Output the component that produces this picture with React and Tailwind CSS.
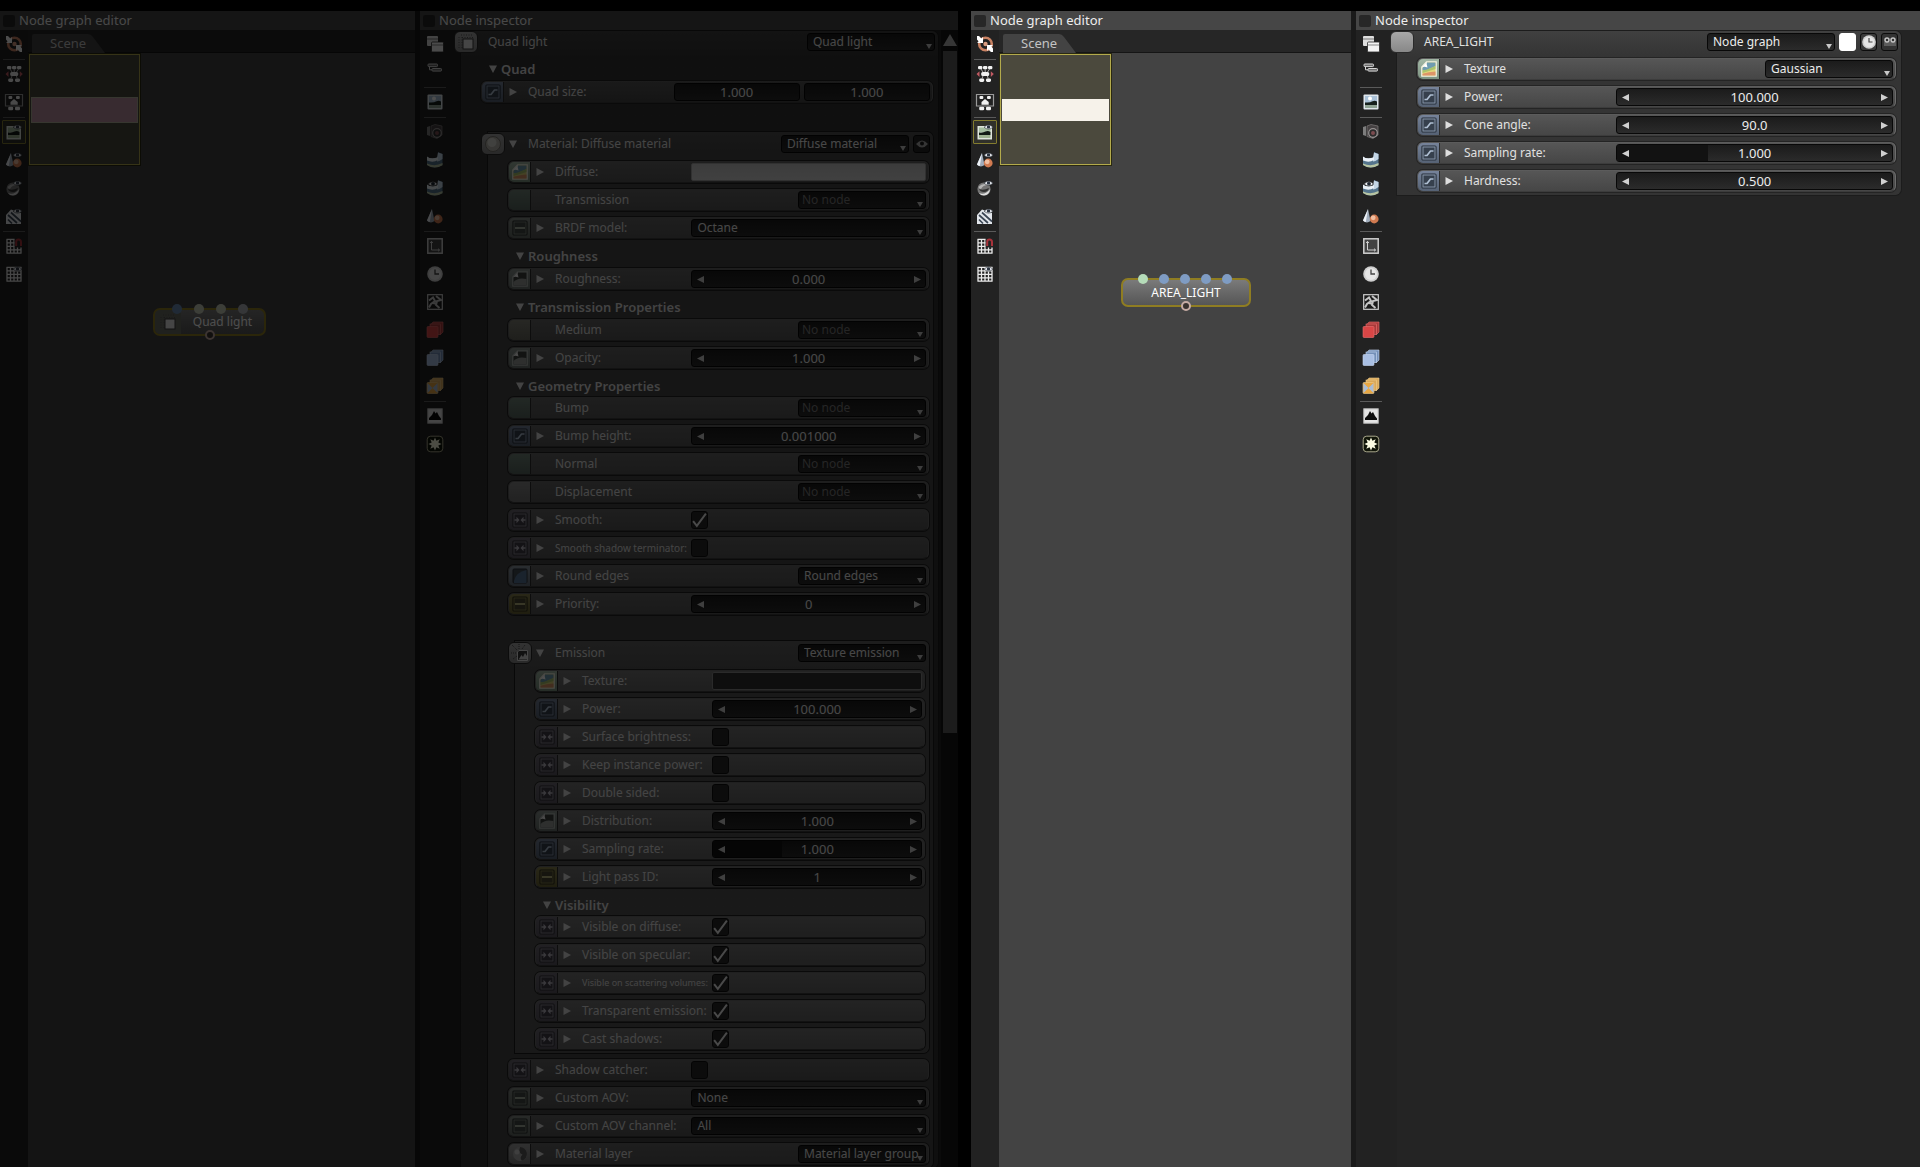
import { useId } from 'react';

/* ---------- toolbar glyphs (16 x 16) ---------- */

const Eye = () => (
  <g>
    <path d="M7 3.2Q11.5-1.2 16 3.2Q11.5 7 7 3.2Z" fill="#e9edf2" stroke="#2a2f36" strokeWidth=".6" />
    <circle cx="11.5" cy="2.9" r="1.7" fill="#2b3340" />
  </g>
);

const Nodes = () => (
  <g fill="#f1f1f1">
    <rect x="1" y="0" width="4.4" height="3.2" rx="1.2" />
    <rect x="6" y="0" width="4.4" height="3.2" rx="1.2" />
    <rect x="11" y="0" width="4.4" height="3.2" rx="1.2" />
    <rect x="4.2" y="6" width="8" height="4" rx="1.5" />
    <rect x="2.2" y="12.4" width="5" height="3.6" rx="1.4" />
    <rect x="9" y="12.4" width="5" height="3.6" rx="1.4" />
    <path d="M4 3l2 3M8.2 3v3M12.6 3l-2 3M6 10l-1.2 3M10.4 10l1 3" stroke="#aaa" strokeWidth="1" />
  </g>
);

const Grid = () => (
  <path
    d="M1 1v14.5M4.5 1v14.5M8 1v14.5M11.5 1v14.5M15 1v14.5M.5 1.3h15M.5 4.8h15M.5 8.3h15M.5 11.8h15M.5 15.2h15"
    stroke="#ececec"
    strokeWidth="1.3"
    fill="none"
  />
);

const Cone = () => (
  <g>
    <path d="M5 1L0 12.5Q3.5 16 7.5 13Z" fill="#9fabba" />
    <path d="M5 1L2.800 14Q.8 13.600 0 12.5Z" fill="#eef2f7" />
    <circle cx="11.200" cy="11" r="4.4" fill="#d07a50" />
    <circle cx="10.200" cy="9.8" r="2.4" fill="#f0bfa2" />
  </g>
);

const Cylinder = () => (
  <g>
    <path d="M0 6v7Q7.5 18 15.5 13V2L11 0v5Q6 8 0 5Z" fill="#54748c" />
    <path d="M11 .5L15.500 2V7Q12 9.500 10 9.500V5.500Z" fill="#c4d6e6" />
    <path d="M0 4.5Q4 7.800 11 5.2V8Q6 11 0 8.500Z" fill="#e9f0f6" />
    <path d="M0 11.500Q8 15 15.5 11v2.200Q7.5 18 0 13Z" fill="#b7c4a2" />
  </g>
);

const Cubes = ({ front, side, edge }) => (
  <g stroke={edge} strokeWidth=".6">
    <path d="M6 0h10v10l-3 3V3H3.5Z" fill={side} />
    <rect x="3" y="2" width="10.5" height="10.5" fill={side} />
    <rect x="0" y="4.5" width="11" height="11" rx="1" fill={front} />
  </g>
);

const Scenery = () => (
  <g>
    <rect x=".5" y=".5" width="15" height="15" rx="1" fill="#dfe6ec" />
    <rect x="2" y="2" width="12" height="8" fill="#a9c0d6" />
    <circle cx="7" cy="4.5" r="2" fill="#fff" />
    <path d="M2 8.5Q7 9 9.5 7.2Q12 6 14 7.6V11H2Z" fill="#16201d" />
    <rect x="2" y="11" width="12" height="3" fill="#8fa394" />
  </g>
);

const GLYPHS = {
  target: (
    <g>
      <circle cx="8.5" cy="8" r="6.3" fill="none" stroke="#c98263" strokeWidth="2.6" />
      <circle cx="8.5" cy="8" r="2.2" fill="#d99c80" />
      <path d="M0 0h2l2.5 2.5L6 1v6H0l1.6-1.6L0 3.5Z" fill="#fff" />
      <path d="M16 16h-2l-2.5-2.5L10 15V9h6l-1.6 1.6L16 12.5Z" fill="#fff" />
    </g>
  ),
  nodesFit: (
    <g>
      <Nodes />
      <path d="M2.500 5.2L-.5 8l3 2.9ZM13.800 5.2l3 2.8-3 2.9Z" fill="#c05a62" />
    </g>
  ),
  nodesFrame: (
    <g>
      <path d="M-.5 .5h17v11.5h-17Z" fill="none" stroke="#9a9a9a" strokeWidth="1.2" />
      <g fill="#f1f1f1">
        <rect x="2.5" y="2" width="3.8" height="3" rx="1" />
        <rect x="10" y="2" width="3.8" height="3" rx="1" />
        <path d="M4.500 8l3.500-3L11.7 8v2.8H4.500Z" />
        <rect x="2.2" y="12.8" width="5" height="3.4" rx="1.3" />
        <rect x="9" y="12.8" width="5" height="3.4" rx="1.3" />
      </g>
    </g>
  ),
  imageEye: (
    <g>
      <rect x=".5" y="2" width="14.5" height="13.5" fill="#dfe5dd" />
      <rect x="2" y="3.5" width="11.5" height="5" fill="#a5bda0" />
      <path d="M2 8.5Q6 9 8.5 7.5Q11 6.5 13.5 8v3H2Z" fill="#121a14" />
      <path d="M2 11h11.5v3H2Z" fill="#9fb391" />
      <Eye />
    </g>
  ),
  coneEye: (
    <g>
      <Cone />
      <Eye />
    </g>
  ),
  ballEye: (
    <g>
      <circle cx="7" cy="9" r="6.6" fill="#747474" />
      <path d="M1.500 7Q6 2 11 5Q6 5 4 9Q2 9 1.500 7Z" fill="#b4b4b4" />
      <path d="M2 9Q6 11 12 8Q11 12 7 12Q3 12 2 9Z" fill="#303030" />
      <path d="M2 13Q8 15.500 13.200 9Q12 15.5 7 15.5Q3.500 15.500 2 13Z" fill="#dedede" />
      <Eye />
    </g>
  ),
  textureEye: (
    <g>
      <path d="M0 7L5 1.500L15 5V16H0Z" fill="#e3e7ec" />
      <path d="M2 7l9 8M5 4.500l10 9M2 11.500l4 4" stroke="#3b4654" strokeWidth="1.700" />
      <Eye />
    </g>
  ),
  gridMagnet: (
    <g>
      <Grid />
      <rect x="8.600" y="0" width="8" height="9.500" fill="#242424" />
      <path d="M10.200 8V4a2.400 2.400 0 0 1 4.800 0v4" fill="none" stroke="#a8323a" strokeWidth="2" />
    </g>
  ),
  gridEye: (
    <g>
      <Grid />
      <Eye />
    </g>
  ),
  windows: (
    <g>
      <rect x="0" y="0" width="11" height="10" rx="1" fill="#dedede" />
      <rect x="0" y="2.500" width="11" height="1" fill="#777" />
      <rect x="4.500" y="6" width="12" height="10" rx="1" fill="#f4f4f4" stroke="#2a2a2a" strokeWidth=".8" />
      <rect x="5" y="8.500" width="11" height="1" fill="#888" />
    </g>
  ),
  bars: (
    <g fill="#6c6c6c" stroke="#d6d6d6" strokeWidth="1">
      <rect x="1" y="0" width="9.500" height="2.600" rx=".8" />
      <rect x="5" y="4.500" width="9.500" height="2.600" rx=".8" />
      <path d="M2.500 2.800v3H5" fill="none" />
    </g>
  ),
  image: <Scenery />,
  camera: (
    <g>
      <path d="M0 3l3-1v10l-3-1Z" fill="#7d7d7d" />
      <path d="M4 2l4-1.500 7 1.500v9l-5 3.500-6-2Z" fill="#454142" stroke="#7f7b7b" strokeWidth=".7" />
      <circle cx="10" cy="9" r="4.300" fill="#2b2b2b" stroke="#969292" strokeWidth="1.200" />
      <circle cx="10" cy="9" r="2" fill="#7c4c50" />
    </g>
  ),
  cylinder: <Cylinder />,
  cylinderEye: (
    <g>
      <Cylinder />
      <path d="M1 4Q6-.5 10.500 4Q6 8 1 4Z" fill="#f1f4f8" stroke="#333" strokeWidth=".6" />
      <circle cx="6" cy="3.800" r="1.900" fill="#202833" />
    </g>
  ),
  cone: <Cone />,
  axes: (
    <g fill="none" stroke="#cfcfcf">
      <rect x=".8" y=".8" width="14.400" height="14.400" strokeWidth="1.500" fill="#424242" />
      <path d="M4.500 3.500v8.500h8M3.200 5l1.300-1.700L5.800 5M11 10.700l1.600 1.300-1.600 1.300" strokeWidth="1" />
    </g>
  ),
  clock: (
    <g>
      <circle cx="8" cy="8" r="7.800" fill="#cfcfcf" />
      <circle cx="8" cy="8" r="6" fill="#e6e6e6" />
      <path d="M8 3.500V8h4" stroke="#444" strokeWidth="1.300" fill="none" />
    </g>
  ),
  pattern: (
    <g>
      <rect x=".7" y=".7" width="14.600" height="14.600" fill="#1b1b1b" stroke="#cfcfcf" strokeWidth="1.200" />
      <path d="M2 6.500l4-3 2 3.500-4 3-2 3.500M9 2l5 4-4 1-1 4 3.500 3M6 9l4 1" stroke="#c4c4c4" strokeWidth="2" fill="none" />
    </g>
  ),
  cubesRed: <Cubes front="#d94646" side="#a83a3a" edge="#e87070" />,
  cubesBlue: <Cubes front="#a9bfe3" side="#7490b8" edge="#c9d9f2" />,
  cubesOrange: (
    <g>
      <Cubes front="#e8a743" side="#d9a95c" edge="#f0cc8a" />
      <path d="M.5 5l5 5-5 5ZM10.500 5l-5 5 5 5Z" fill="#a9bcd6" />
    </g>
  ),
  mountain: (
    <g>
      <rect x=".8" y=".8" width="14.400" height="14.400" fill="#e4e4e4" stroke="#bcbcbc" />
      <path d="M2 12v-2l3-3 2-4 1.500 2.500L10 4l2 4 2 2.500V12Z" fill="#0d0d0d" />
    </g>
  ),
  star: (
    <g>
      <rect x=".2" y=".2" width="15.600" height="15.600" rx="3.500" fill="#101408" stroke="#aaa98c" />
      <path
        d="M8 1.400l1.400 3.300 3.300-1.400-1.400 3.300L14.600 8l-3.300 1.400 1.400 3.300-3.300-1.400L8 14.600l-1.400-3.300-3.300 1.400 1.400-3.300L1.400 8l3.300-1.400-1.400-3.300 3.300 1.400Z"
        fill="#fbfbe2"
      />
    </g>
  ),
};

const GRAPH_TOOLS = [
  ['target', 'Recenter view'],
  null,
  ['nodesFit', 'Unfold nodes'],
  ['nodesFrame', 'Arrange nodes'],
  null,
  ['imageEye', 'Render target preview', true],
  ['coneEye', 'Mesh preview'],
  ['ballEye', 'Material preview'],
  ['textureEye', 'Texture preview'],
  null,
  ['gridMagnet', 'Snap to grid'],
  ['gridEye', 'Show grid'],
];

const INSPECTOR_TOOLS = [
  ['windows', 'Expand all'],
  ['bars', 'Collapse all'],
  null,
  ['image', 'Render target'],
  null,
  ['camera', 'Camera'],
  ['cylinder', 'Environment'],
  ['cylinderEye', 'Visible environment'],
  ['cone', 'Mesh'],
  null,
  ['axes', 'Film settings'],
  ['clock', 'Animation settings'],
  ['pattern', 'Kernel'],
  ['cubesRed', 'Render layer'],
  ['cubesBlue', 'Render passes'],
  ['cubesOrange', 'Output AOVs'],
  null,
  ['mountain', 'Imager'],
  ['star', 'Post processing'],
];

function Toolbar({ tools, wide }) {
  return (
    <nav className={`flex shrink-0 flex-col bg-[#222222] ${wide ? 'w-[41px] pr-[12px]' : 'w-7'}`}>
      {tools.map((t, i) =>
        t ? (
          <button
            key={i}
            type="button"
            aria-label={t[1]}
            className={`mx-auto my-[2px] flex h-6 w-6 items-center justify-center rounded-[1px] border ${
              t[2] ? 'border-[#837c2e] bg-[#30302a]' : 'border-transparent'
            }`}
          >
            <svg viewBox="0 0 16 16" className="h-4 w-4 shrink-0 overflow-visible">
              {GLYPHS[t[0]]}
            </svg>
          </button>
        ) : (
          <div key={i} className="mx-auto mt-px h-px w-[22px] bg-[#5a5a5a]" />
        ),
      )}
    </nav>
  );
}

function TitleBar({ children }) {
  return (
    <header className="flex h-[19px] shrink-0 items-center bg-[#464646] pl-[3px] text-[#ededed]">
      <span className="mr-[4px] h-3 w-3 rounded-[2px] bg-[#272727]" />
      <h2 className="pb-px text-[13px] leading-[18px]">{children}</h2>
    </header>
  );
}

/* ---------- property row pieces ---------- */

const TILES = {
  texture: 'from-[#a3b8a6] to-[#7d9482]',
  grey: 'from-[#8b9490] to-[#6b7470]',
  float: 'from-[#76839a] to-[#566274]',
  bool: 'from-[#6e6a74] to-[#5a5661]',
  int: 'from-[#8a8450] to-[#6a6434]',
  enum: 'from-[#858b86] to-[#626a64]',
  round: 'from-[#8a95a0] to-[#66707c]',
  layer: 'from-[#a0a0a0] to-[#7a7a7a]',
  emptyGreen: 'from-[#72857a] to-[#586860]',
  emptyWarm: 'from-[#828278] to-[#68685e]',
  emptyGrey: 'from-[#888888] to-[#707070]',
};

const TILE_GLYPHS = {
  texture: (
    <g>
      <path d="M5.500.8H15.200V15.200H.8V6Z" fill="#e2d678" stroke="#f0f0e4" strokeWidth="1.300" />
      <path d="M6 1.500h8.500v3.500L6 9L1.500 9.500V7Z" fill="#6f9cb0" />
      <path d="M1.500 9.500L6 8.500L14.500 5v3L1.500 12Z" fill="#a9c46e" />
      <path d="M1.500 12.800Q8 11 14.500 10.500v4h-13Z" fill="#dd9468" />
      <path d="M1 6.500Q3 5 6.500 6.500Q5 3 6 .8Z" fill="#fff" />
    </g>
  ),
  grey: (
    <g>
      <path d="M5.500.8H15.200V15.200H.8V6Z" fill="#3c403e" stroke="#b4bab6" strokeWidth="1.300" />
      <path d="M1.500 11Q6 6 14.500 8v6.500h-13Z" fill="#979d99" />
      <path d="M1 6.500Q3 5 6.500 6.500Q5 3 6 .8Z" fill="#f0f0f0" />
    </g>
  ),
  float: (
    <g>
      <rect x="1" y="1" width="14" height="14" rx="1" fill="#36404d" stroke="#252d38" strokeWidth="1.200" />
      <rect x="2" y="2" width="12" height="12" fill="none" stroke="#8593a8" strokeWidth="1" />
      <path d="M3.500 10.500H6L9.500 6H12.500" fill="none" stroke="#b0c0d4" strokeWidth="1.700" strokeLinejoin="round" />
    </g>
  ),
  bool: (
    <g>
      <rect x="1" y="1" width="14" height="14" rx="1" fill="#413e47" stroke="#2f2d34" strokeWidth="1.200" />
      <rect x="2" y="2" width="12" height="12" fill="none" stroke="#8a8692" strokeWidth="1" />
      <path d="M2.500 8h3M10.500 8h3" stroke="#bcb8c4" strokeWidth="1.600" />
      <path d="M4.500 4.800L7.500 8l-3 3.200ZM11.500 4.800v6.400L8.500 8Z" fill="#bcb8c4" />
    </g>
  ),
  int: (
    <g>
      <rect x="1" y="1" width="14" height="14" rx="1" fill="#4a4833" stroke="#302e1c" strokeWidth="1.200" />
      <rect x="2" y="2" width="12" height="12" fill="none" stroke="#8f884e" strokeWidth=".8" />
      <path d="M3 8h10" stroke="#c9c286" strokeWidth="1.800" />
    </g>
  ),
  enum: (
    <g>
      <rect x="1" y="1" width="14" height="14" rx="1" fill="#444a46" stroke="#2a2f2c" strokeWidth="1.200" />
      <rect x="2" y="2" width="12" height="12" fill="none" stroke="#848c86" strokeWidth=".8" />
      <path d="M3 8h10" stroke="#b3bda9" strokeWidth="1.800" />
    </g>
  ),
  round: (
    <g>
      <rect x="1" y="1" width="14" height="14" rx="1" fill="#444c55" stroke="#2b3138" strokeWidth="1" />
      <path d="M2 15V13Q4 4 14.500 2V15Z" fill="#587596" />
    </g>
  ),
  layer: (
    <g>
      <circle cx="8" cy="8" r="7" fill="#aaaaaa" />
      <path d="M8 1a7 7 0 0 1 2 13.700Q7 12 10.500 8.500Q6 7 8 1Z" fill="#5a5a5a" />
      <circle cx="5" cy="6" r="2.500" fill="#cfcfcf" />
    </g>
  ),
};

function Expander({ open }) {
  return (
    <button
      type="button"
      aria-label={open ? 'Collapse' : 'Expand'}
      className="flex h-4 w-4 shrink-0 items-center justify-center text-[#dedede]"
    >
      <svg viewBox="0 0 8 8" className="h-2 w-2" fill="currentColor">
        {open ? <path d="M0 .5h8L4 8Z" /> : <path d="M.5 0L8 4 .5 8Z" />}
      </svg>
    </button>
  );
}

const FIELD = 'rounded-[3px] border border-[#080808] bg-linear-to-b from-[#1b1b1b] to-[#2b2b2b]';

function Picker({ id, value, wide, muted, label }) {
  return (
    <div className={`relative h-[18px] ${wide ? 'w-full' : 'w-32 shrink-0'}`}>
      <select
        id={id}
        aria-label={label}
        defaultValue={value}
        className={`${FIELD} block h-full w-full appearance-none text-[12px] leading-4 ${
          muted ? 'pl-[3px] text-[#7c7c7c]' : 'pl-[5px] text-[#ececec]'
        }`}
      >
        <option>{value}</option>
      </select>
      <svg viewBox="0 0 6 5" className="pointer-events-none absolute right-[3px] bottom-[2px] h-[5px] w-[6px]">
        <path d="M0 0h6L3 5Z" fill="#c9c9c9" />
      </svg>
    </div>
  );
}

function NumberField({ id, value, fill, plain, label }) {
  return (
    <div className={`${FIELD} relative flex h-[18px] w-full min-w-0 items-center overflow-hidden text-[#ececec]`}>
      {fill && <span className="absolute inset-y-0 left-0 w-[33%] bg-[#121212]" />}
      {!plain && (
        <button type="button" aria-label="Decrease" className="relative flex h-full w-4 shrink-0 items-center justify-center">
          <svg viewBox="0 0 7 7" className="h-[7px] w-[7px]">
            <path d="M7 0v7L0 3.500Z" fill="#d0d0d0" />
          </svg>
        </button>
      )}
      <input
        id={id}
        type="text"
        aria-label={label}
        defaultValue={value}
        className="relative h-full w-full min-w-0 bg-transparent text-center text-[13px] leading-4 outline-none"
      />
      {!plain && (
        <button type="button" aria-label="Increase" className="relative flex h-full w-4 shrink-0 items-center justify-center">
          <svg viewBox="0 0 7 7" className="h-[7px] w-[7px]">
            <path d="M0 0v7L7 3.500Z" fill="#d0d0d0" />
          </svg>
        </button>
      )}
    </div>
  );
}

function Tick({ id, on }) {
  return (
    <div className="relative h-[18px] w-[17px]">
      <input
        id={id}
        type="checkbox"
        defaultChecked={on}
        className="peer block h-full w-full appearance-none rounded-[3px] border border-[#101010] bg-[#2a2a2a]"
      />
      <svg
        viewBox="0 0 16 16"
        className="pointer-events-none absolute inset-0 hidden h-[17px] w-[17px] peer-checked:block"
      >
        <path d="M2 9.500L5.500 14L14 2.500" fill="none" stroke="#f2f2f2" strokeWidth="1.800" />
      </svg>
    </div>
  );
}

function Control({ id, kind, value, value2, fill, label }) {
  switch (kind) {
    case 'slider':
      return <NumberField id={id} value={value} fill={fill} />;
    case 'pair':
      return (
        <div className="flex w-full gap-1">
          <NumberField id={id} value={value} plain />
          <NumberField value={value2} plain label={`${label} second value`} />
        </div>
      );
    case 'select':
      return <Picker id={id} value={value} wide />;
    case 'check':
      return <Tick id={id} on={value} />;
    case 'swatch':
      return (
        <button
          id={id}
          type="button"
          className={`h-[18px] w-full rounded-[2px] border ${
            value === 'light' ? 'border-[#a4a4a4] bg-linear-to-b from-[#c6c6c6] to-[#d6d6d6]' : 'border-[#8a8a8a] bg-[#2e2e2e]'
          }`}
        />
      );
    default:
      return null;
  }
}

const ROW_TONE = {
  0: 'from-[#565656] to-[#464646]',
  1: 'from-[#646464] to-[#565656]',
  2: 'from-[#747474] to-[#666666]',
};
const CONTROL_WIDTH = { 0: 'w-[58%]', 1: 'w-[56%]', 2: 'w-[54%]' };

function controlWidth(kind, level) {
  if (kind === 'node') return 'w-32';
  if (kind === 'pair') return 'w-[57%]';
  return CONTROL_WIDTH[level];
}

function Row({ level = 0, icon, label, kind, value, value2, fill, size = 'text-[12px]' }) {
  const id = useId();
  const empty = icon.startsWith('empty');
  const node = kind === 'node';
  return (
    <div className="flex h-7 items-center">
      <div
        className={`flex h-[22px] w-full items-center rounded-[6px] border border-t-[#7272727a] border-r-[#6c6c6c] border-b-[#3c3c3c] border-l-transparent bg-linear-to-b shadow-[0_0_0_1px_#242424] ${ROW_TONE[level]}`}
      >
        <span
          className={`flex h-full w-[22px] shrink-0 items-center justify-center rounded-l-[5px] border-r border-[#2c2c2c] bg-linear-to-b ${TILES[icon]}`}
        >
          {!empty && (
            <svg viewBox="0 0 16 16" className="h-4 w-4">
              {TILE_GLYPHS[icon]}
            </svg>
          )}
        </span>
        <span className="ml-px h-4 w-4 shrink-0">{!empty && <Expander />}</span>
        <label htmlFor={id} className={`ml-[7px] min-w-0 flex-1 leading-4 whitespace-nowrap text-[#e0e0e0] ${size}`}>
          {label}
        </label>
        <div className={`mr-[2px] flex shrink-0 ${controlWidth(kind, level)}`}>
          {node ? (
            <Picker id={id} value={value} muted={value === 'No node'} />
          ) : (
            <Control id={id} kind={kind} value={value} value2={value2} fill={fill} label={label} />
          )}
        </div>
      </div>
    </div>
  );
}

const PANEL_TONE = {
  0: 'bg-linear-to-b from-[#404040] to-[#343434] to-[26px]',
  1: 'bg-linear-to-b from-[#505050] to-[#454545] to-[26px]',
  2: 'bg-linear-to-b from-[#626262] to-[#555555] to-[26px]',
};

const BADGES = {
  plain: null,
  quad: (
    <g>
      <path d="M2 4v11M5 4v11M4 2h11M5 4.500h11" stroke="#555" strokeWidth="1" strokeDasharray="1 1.500" />
      <rect x="6" y="6" width="10" height="10" fill="#e4e4e4" stroke="#3a3a3a" />
    </g>
  ),
  ball: (
    <g>
      <circle cx="9" cy="9" r="7.500" fill="#b5b3ac" stroke="#77756e" />
      <circle cx="8" cy="7.500" r="4.500" fill="#d8d6cf" />
    </g>
  ),
  emission: (
    <g>
      <path d="M1 1l5 5M8 0v5M0 9h5M14 1l-3 4M2 15l4-3" stroke="#4a4a4a" strokeWidth="1" strokeDasharray="1 1" />
      <path d="M8 6.500h8.500v10H6.500V8Z" fill="#3a3a3a" stroke="#ececec" strokeWidth="1" />
      <path d="M7.500 15.500l3-4.500 1.500 2 2-4 2 3v3.500Z" fill="#dcdcdc" />
    </g>
  ),
};

function Panel({ level, badge, title, controls, children, root }) {
  return (
    <section
      className={`rounded-r-[6px] shadow-[0_0_0_1px_#1c1c1c] ${root ? 'mt-px mr-[19px]' : 'mt-[2px] ml-[7px]'} ${PANEL_TONE[level]}`}
    >
      <header className={`-ml-[7px] flex items-center pr-[3px] pb-[2px] ${root ? 'h-6' : 'h-[26px]'}`}>
        <span className="flex h-[22px] w-6 shrink-0 items-center justify-center rounded-[6px] border border-[#2a2a2a] bg-linear-to-b from-[#a8a8a8] to-[#888888]">
          <svg viewBox="0 0 18 18" className="h-[18px] w-[18px]">
            {BADGES[badge]}
          </svg>
        </span>
        {root ? <span className="w-[10px]" /> : <Expander open />}
        <h3 className={`min-w-0 flex-1 text-[12px] leading-4 whitespace-nowrap text-[#e0e0e0] ${root ? '' : 'ml-[7px]'}`}>
          {title}
        </h3>
        <div className="flex items-center gap-1">{controls}</div>
      </header>
      <div className={`flex flex-col pl-5 ${level === 0 ? 'pr-[5px]' : 'pr-1'}`}>{children}</div>
    </section>
  );
}

function Heading({ children, short }) {
  return (
    <div className={`flex items-center pt-[5px] pl-[4px] ${short ? 'h-[22px]' : 'h-[23px]'}`}>
      <Expander open />
      <h4 className="text-[13px] leading-4 font-semibold whitespace-nowrap text-[#dcdcdc]">{children}</h4>
    </div>
  );
}

const TabBar = () => (
  <div className="flex h-[23px] shrink-0 items-end border-b border-[#151515] bg-[#262626] pl-1">
    <button type="button" className="relative h-[18px] w-[73px] text-left text-[13px] leading-[18px] text-[#c4c4c4]">
      <svg viewBox="0 0 73 19" preserveAspectRatio="none" className="absolute inset-0 h-[19px] w-full">
        <path d="M0 19V2Q0 0 2 0H56Q59 0 61 3L73 19Z" fill="#434343" />
      </svg>
      <span className="relative pl-[18px]">Scene</span>
    </button>
  </div>
);

const DOT = {
  green: 'bg-[#b5dcb9]',
  blue: 'bg-[#7f9cc3]',
  steel: 'bg-[#6b8db4]',
  olive: 'bg-[#c8ccba]',
  slate: 'bg-[#b0b4ba]',
};

function GraphNode({ name, place, pins, withIcon, pinRow }) {
  return (
    <div className={`absolute rounded-[7px] border-2 border-[#8f7d22] bg-linear-to-b from-[#7a7a7a] to-[#565656] ${place}`}>
      <div className="flex h-full items-center overflow-hidden rounded-[5px]">
        {withIcon && (
          <span className="flex h-full w-[26px] shrink-0 items-center justify-center bg-[#6c6e65]">
            <svg viewBox="0 0 18 18" className="h-[18px] w-[18px]">
              {BADGES.quad}
            </svg>
          </span>
        )}
        <span className="flex-1 text-center text-[12px] leading-4 text-white">{name}</span>
      </div>
      <div className={`absolute -top-[6px] flex ${pinRow}`}>
        {pins.map((p, i) => (
          <span key={i} className={`h-[10px] w-[10px] rounded-full ${DOT[p]}`} />
        ))}
      </div>
      <span className="absolute -bottom-[6px] left-1/2 h-[10px] w-[10px] -translate-x-1/2 rounded-full border-2 border-[#c7aca4] bg-[#3a3330]" />
    </div>
  );
}

function GraphEditor({ band, children }) {
  return (
    <section className="flex min-h-0 min-w-0 flex-col">
      <TitleBar>Node graph editor</TitleBar>
      <div className="flex min-h-0 flex-1">
        <Toolbar tools={GRAPH_TOOLS} />
        <div className="flex min-w-0 flex-1 flex-col">
          <TabBar />
          <div className="relative flex-1 overflow-hidden bg-[#434343] pt-px pl-px">
            <div className="flex h-[111px] w-[111px] items-center border border-[#b3aa4c] bg-[#4b493d] p-px shadow-[0_0_0_1px_#2a2912]">
              <div className={`w-full ${band}`} />
            </div>
            {children}
          </div>
        </div>
      </div>
    </section>
  );
}

function Inspector({ children, scroll }) {
  return (
    <section className="flex min-h-0 min-w-0 flex-col">
      <TitleBar>Node inspector</TitleBar>
      <div className="flex min-h-0 flex-1">
        <Toolbar tools={INSPECTOR_TOOLS} wide />
        <div className={`min-w-0 flex-1 bg-[#242424] ${scroll ? 'pr-px' : ''}`}>{children}</div>
        {scroll && (
          <div className="-ml-[17px] flex w-[17px] shrink-0 flex-col items-center bg-[#141414]">
            <svg viewBox="0 0 14 12" className="mt-[4px] mb-[5px] h-3 w-[14px] shrink-0">
              <path d="M7 0L14 12H0Z" fill="#b4b4b4" />
            </svg>
            <div className="h-[60%] w-[14px] bg-[#5c5c5c]" />
          </div>
        )}
      </div>
    </section>
  );
}

const SmallButton = ({ label, className, children }) => (
  <button
    type="button"
    aria-label={label}
    className={`flex h-[18px] w-[17px] shrink-0 items-center justify-center rounded-[3px] border ${className}`}
  >
    {children}
  </button>
);

const MATERIAL_TOP = [
  { icon: 'texture', label: 'Diffuse:', kind: 'swatch', value: 'light' },
  { icon: 'emptyGreen', label: 'Transmission', kind: 'node', value: 'No node' },
  { icon: 'enum', label: 'BRDF model:', kind: 'select', value: 'Octane' },
];
const TRANSMISSION = [
  { icon: 'emptyWarm', label: 'Medium', kind: 'node', value: 'No node' },
  { icon: 'grey', label: 'Opacity:', kind: 'slider', value: '1.000' },
];
const GEOMETRY = [
  { icon: 'emptyGreen', label: 'Bump', kind: 'node', value: 'No node' },
  { icon: 'float', label: 'Bump height:', kind: 'slider', value: '0.001000' },
  { icon: 'emptyGreen', label: 'Normal', kind: 'node', value: 'No node' },
  { icon: 'emptyGrey', label: 'Displacement', kind: 'node', value: 'No node' },
  { icon: 'bool', label: 'Smooth:', kind: 'check', value: true },
  { icon: 'bool', label: 'Smooth shadow terminator:', kind: 'check', value: false, size: 'text-[10px]' },
  { icon: 'round', label: 'Round edges', kind: 'node', value: 'Round edges' },
  { icon: 'int', label: 'Priority:', kind: 'slider', value: '0' },
];
const EMISSION = [
  { icon: 'texture', label: 'Texture:', kind: 'swatch', value: 'dark' },
  { icon: 'float', label: 'Power:', kind: 'slider', value: '100.000' },
  { icon: 'bool', label: 'Surface brightness:', kind: 'check', value: false },
  { icon: 'bool', label: 'Keep instance power:', kind: 'check', value: false },
  { icon: 'bool', label: 'Double sided:', kind: 'check', value: false },
  { icon: 'grey', label: 'Distribution:', kind: 'slider', value: '1.000' },
  { icon: 'float', label: 'Sampling rate:', kind: 'slider', value: '1.000', fill: true },
  { icon: 'int', label: 'Light pass ID:', kind: 'slider', value: '1' },
];
const VISIBILITY = [
  { icon: 'bool', label: 'Visible on diffuse:', kind: 'check', value: true },
  { icon: 'bool', label: 'Visible on specular:', kind: 'check', value: true },
  { icon: 'bool', label: 'Visible on scattering volumes:', kind: 'check', value: true, size: 'text-[9px]' },
  { icon: 'bool', label: 'Transparent emission:', kind: 'check', value: true },
  { icon: 'bool', label: 'Cast shadows:', kind: 'check', value: true },
];
const MATERIAL_END = [
  { icon: 'bool', label: 'Shadow catcher:', kind: 'check', value: false },
  { icon: 'enum', label: 'Custom AOV:', kind: 'select', value: 'None' },
  { icon: 'enum', label: 'Custom AOV channel:', kind: 'select', value: 'All' },
  { icon: 'layer', label: 'Material layer', kind: 'node', value: 'Material layer group' },
];
const AREA_LIGHT = [
  { icon: 'texture', label: 'Texture', kind: 'node', value: 'Gaussian' },
  { icon: 'float', label: 'Power:', kind: 'slider', value: '100.000' },
  { icon: 'float', label: 'Cone angle:', kind: 'slider', value: '90.0' },
  { icon: 'float', label: 'Sampling rate:', kind: 'slider', value: '1.000', fill: true },
  { icon: 'float', label: 'Hardness:', kind: 'slider', value: '0.500' },
];

const rows = (list, level) => list.map((r) => <Row key={r.label} level={level} {...r} />);

export default function App() {
  return (
    <main className='grid h-screen grid-cols-[958fr_949fr] gap-x-[13px] overflow-hidden bg-black pt-[11px] font-["Noto_Sans",sans-serif]'>
      <div className="grid min-h-0 grid-cols-[415fr_538fr] gap-x-[5px] bg-[#1a1a1a] opacity-30">
        <GraphEditor band="h-[26px] border border-[#b4b39c] bg-[#b98ea0]">
          <GraphNode
            name="Quad light"
            place="left-[125px] top-[255px] h-7 w-[113px]"
            pins={['steel', 'olive', 'olive', 'slate']}
            pinRow="left-[17px] gap-3"
            withIcon
          />
        </GraphEditor>
        <Inspector scroll>
          <Panel root level={0} badge="quad" title="Quad light" controls={<Picker value="Quad light" label="Node type" />}>
            <Heading>Quad</Heading>
            <Row icon="float" label="Quad size:" kind="pair" value="1.000" value2="1.000" />
            <div className="h-6" />
            <Panel
              level={1}
              badge="ball"
              title="Material: Diffuse material"
              controls={
                <>
                  <Picker value="Diffuse material" label="Material type" />
                  <SmallButton label="Preview material" className="border-[#0c0c0c] bg-[#262626]">
                    <svg viewBox="0 0 12 8" className="h-2 w-3">
                      <path d="M0 4Q6-3 12 4Q6 11 0 4Z" fill="#b0b0b0" />
                      <circle cx="6" cy="3.600" r="2" fill="#1e1e1e" />
                    </svg>
                  </SmallButton>
                </>
              }
            >
              {rows(MATERIAL_TOP, 1)}
              <Heading>Roughness</Heading>
              <Row level={1} icon="grey" label="Roughness:" kind="slider" value="0.000" />
              <Heading>Transmission Properties</Heading>
              {rows(TRANSMISSION, 1)}
              <Heading short>Geometry Properties</Heading>
              {rows(GEOMETRY, 1)}
              <div className="h-[21px]" />
              <Panel
                level={2}
                badge="emission"
                title="Emission"
                controls={<Picker value="Texture emission" label="Emission type" />}
              >
                {rows(EMISSION, 2)}
                <Heading short>Visibility</Heading>
                {rows(VISIBILITY, 2)}
              </Panel>
              <div className="h-[3px]" />
              {rows(MATERIAL_END, 1)}
            </Panel>
          </Panel>
        </Inspector>
      </div>

      <div className="grid min-h-0 grid-cols-[380fr_564fr] gap-x-[5px] bg-[#1a1a1a]">
        <GraphEditor band="h-[22px] bg-[#f6f2ea]">
          <GraphNode
            name="AREA_LIGHT"
            place="left-[122px] top-[225px] h-[29px] w-[130px]"
            pins={['green', 'blue', 'blue', 'blue', 'blue']}
            pinRow="left-[15px] gap-[11px]"
          />
        </GraphEditor>
        <Inspector>
          <Panel
            root
            level={0}
            badge="plain"
            title="AREA_LIGHT"
            controls={
              <>
                <Picker value="Node graph" label="Node type" />
                <SmallButton label="Node colour" className="border-white bg-white" />
                <SmallButton label="Animation" className="border-[#0c0c0c] bg-[#3a3a3a]">
                  <svg viewBox="0 0 16 16" className="h-[14px] w-[14px]">
                    {GLYPHS.clock}
                  </svg>
                </SmallButton>
                <SmallButton label="Linked nodes" className="border-[#0c0c0c] bg-[#333333]">
                  <svg viewBox="0 0 14 12" className="h-3 w-[14px]">
                    <path d="M1 6h12v4H1Z" fill="#5c5c5c" />
                    <g fill="#333333" stroke="#c4c4c4" strokeWidth="1.500">
                      <circle cx="4" cy="4" r="2" />
                      <circle cx="10" cy="4" r="2" />
                    </g>
                  </svg>
                </SmallButton>
              </>
            }
          >
            {rows(AREA_LIGHT, 0)}
          </Panel>
        </Inspector>
      </div>
    </main>
  );
}
